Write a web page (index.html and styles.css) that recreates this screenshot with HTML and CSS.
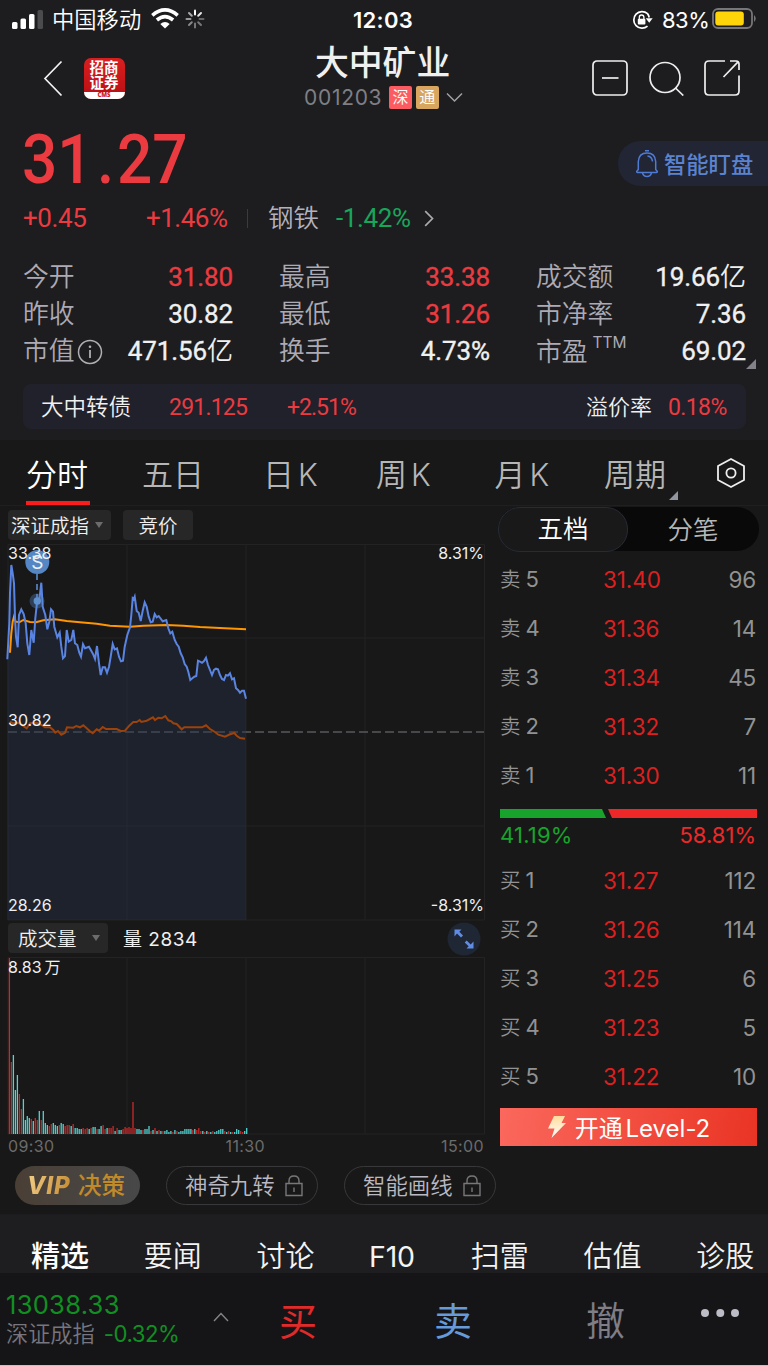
FILE: index.html
```html
<!DOCTYPE html>
<html lang="zh-CN">
<head>
<meta charset="utf-8">
<title>大中矿业</title>
<link rel="stylesheet" href="styles.css">
</head>
<body>
<div class="app">
  <div class="status">
    <svg class="signal" width="34" height="22" viewBox="0 0 34 22"><g fill="#fff"><rect x="1" y="13" width="5.5" height="7" rx="1.5"/><rect x="9.500" y="9.500" width="5.500" height="10.500" rx="1.500"/><rect x="18" y="5" width="5.500" height="15" rx="1.500"/><rect x="26.500" y="1" width="5.500" height="19" rx="1.500" fill="#4b4b4d"/></g></svg>
    <span class="carrier">中国移动</span>
    <svg class="wifi" width="28" height="21" viewBox="0 0 28 21" fill="none" stroke="#fff" stroke-width="3.6"><path d="M1.300 7.300Q14-3.500 26.700 7.300"/><path d="M5.900 12Q14 5.300 22.100 12"/><path d="M14 20.500L9.300 15.900Q14 12.200 18.700 15.900Z" fill="#fff" stroke="none"/></svg>
    <svg class="spinner" width="20" height="20" viewBox="-10 -10 20 20" stroke-width="2" stroke-linecap="round"><path d="M0-4.500V-8.500" stroke="#fff"/><path d="M3.200-3.200L6-6" stroke="#e5e5e5"/><path d="M4.500 0H8.500" stroke="#666"/><path d="M3.200 3.200L6 6M0 4.500V8.500" stroke="#777"/><path d="M-3.200 3.200L-6 6" stroke="#888"/><path d="M-4.500 0H-8.500" stroke="#999"/><path d="M-3.200-3.200L-6-6" stroke="#aaa"/></svg>
    <span class="clock">12:03</span>
    <svg class="rotlock" width="21" height="20" viewBox="0 0 21 20"><path d="M15.500 3.600A8.300 8.300 0 1 0 15.500 16.200M17.200 7.500A8.300 8.300 0 0 0 15.500 3.600" fill="none" stroke="#fff" stroke-width="1.700"/><path d="M13.700 8.300H20.700L17.200 12.800Z" fill="#fff"/><rect x="5.800" y="8.800" width="7.600" height="5.700" rx="1" fill="#fff"/><path d="M7.300 9V7.300a2.300 2.300 0 0 1 4.600 0V9" fill="none" stroke="#fff" stroke-width="1.300"/></svg>
    <span class="charge">83%</span>
    <svg class="battery" width="46" height="22" viewBox="0 0 46 22"><rect x="1" y="1" width="39" height="19" rx="5" fill="none" stroke="#77777a" stroke-width="1.800"/><rect x="3.300" y="3.600" width="28.500" height="14" rx="3" fill="#ffd50a"/><path d="M42 7Q45.500 10.500 42 14Z" fill="#77777a"/></svg>
  </div>

  <header class="nav">
    <svg class="back" width="20" height="38" viewBox="0 0 20 38"><path d="M18.500 2.500L2 19.500L18.500 36.500" fill="none" stroke="#f2f2f2" stroke-width="1.700"/></svg>
    <div class="logo"><div class="logo-name">招商<br>证券</div><div class="logo-sub">CMS</div></div>
    <div class="title">
      <h1>大中矿业</h1>
      <div class="code"><span class="code-num">001203</span><span class="badge sz">深</span><span class="badge tong">通</span><svg width="17" height="11" viewBox="0 0 17 11"><path d="M1 1.500L8.500 9L16 1.500" fill="none" stroke="#a0a0a2" stroke-width="1.500"/></svg></div>
    </div>
    <div class="actions">
      <svg width="36" height="36" viewBox="0 0 36 36" fill="none" stroke="#eee" stroke-width="1.700"><rect x="1" y="1" width="34" height="34" rx="4"/><path d="M10 18H26.500"/></svg>
      <svg width="36" height="36" viewBox="0 0 36 36" fill="none" stroke="#eee" stroke-width="1.700"><circle cx="17" cy="17.500" r="15"/><path d="M27.500 28L35.300 35.500"/></svg>
      <svg width="36" height="36" viewBox="0 0 36 36" fill="none" stroke="#eee" stroke-width="1.700"><path d="M21 1H5Q1 1 1 5V31Q1 35 5 35H31Q35 35 35 31V15.500"/><path d="M26 1H32Q35 1 35 4V10M34.300 1.700L19.500 17"/></svg>
    </div>
  </header>

  <section class="quote">
    <div class="price-row"><span class="price">31<i>.</i>27</span>
      <div class="watch"><svg width="22" height="28" viewBox="0 0 22 28" fill="none" stroke="#4f7bd3" stroke-width="1.500"><path d="M1.500 22.500Q.5 22.500 .8 21.300L2.300 19.500V11.500Q2.800 3 11 3T19.700 11.500V19.500L21.200 21.300Q21.500 22.500 20.500 22.500Z"/><path d="M9 .8H13M6.500 23Q7.500 26.500 11 26.500T15.500 23M11.500 6Q16 6.500 16.500 11.500"/></svg><span>智能盯盘</span></div>
    </div>
    <div class="change-row"><span class="c1 up">+0.45</span><span class="c2 up">+1.46%</span><i class="sep"></i><span class="c3">钢铁</span><span class="c4">-1.42%</span><svg width="10" height="17" viewBox="0 0 10 17"><path d="M1.200 1.200L8.500 8.500L1.200 15.800" fill="none" stroke="#aaa" stroke-width="1.700"/></svg></div>
    <div class="stats">
      <span class="k">今开</span><span class="v up">31.80</span><span class="k">最高</span><span class="v up">33.38</span><span class="k">成交额</span><span class="v">19.66<b>亿</b></span>
      <span class="k">昨收</span><span class="v">30.82</span><span class="k">最低</span><span class="v up">31.26</span><span class="k">市净率</span><span class="v">7.36</span>
      <span class="k">市值<svg width="26" height="26" viewBox="0 0 26 26"><circle cx="13" cy="13" r="11.500" fill="none" stroke="#b0b0b4" stroke-width="1.500"/><path d="M13 11V19" stroke="#b0b0b4" stroke-width="1.800"/><circle cx="13" cy="7.700" r="1.300" fill="#b0b0b4"/></svg></span><span class="v">471.56<b>亿</b></span><span class="k">换手</span><span class="v">4.73%</span><span class="k low">市盈<sup>TTM</sup></span><span class="v">69.02<i class="corner"></i></span>
    </div>
    <div class="bond"><span class="b1">大中转债</span><span class="b2 up">291.125</span><span class="b3 up">+2.51%</span><span class="b4">溢价率</span><span class="b5 up">0.18%</span></div>
  </section>

  <nav class="periods">
    <span class="on">分时</span><span>五日</span><span>日<em>K</em></span><span>周<em>K</em></span><span>月<em>K</em></span><span class="more">周期</span>
    <svg width="30" height="32" viewBox="0 0 30 32" fill="none" stroke="#eee" stroke-width="1.800"><path d="M15 2L28 9V23L15 30L2 23V9Z" stroke-linejoin="round"/><circle cx="15" cy="16" r="4.600"/></svg>
  </nav>

  <main class="body">
    <div class="left">
      <div class="chips"><span class="chip idx">深证成指<i class="tri"></i></span><span class="chip bid">竞价</span></div>
      <svg class="chart" width="490" height="381" viewBox="0 540 490 381">
        <g fill="none" stroke="#232323"><path d="M8 544.500H484.500V920H8ZM127 544V920M246 544V920M365 544V920M8 638H484M8 826H484"/></g>
        <path d="M8 732H484" stroke="#56585c" stroke-width="1.500" stroke-dasharray="9 4" fill="none"/>
        <path id="area" fill="#28324d" fill-opacity=".42"/>
        <path id="index" fill="none" stroke="#9c420b" stroke-width="2"/>
        <path id="average" fill="none" stroke="#ff9500" stroke-width="2"/>
        <path id="line" fill="none" stroke="#5a84e2" stroke-width="2"/>
        <path d="M37 574V602" stroke="#5a8cca" stroke-width="1.600" stroke-dasharray="6 4"/>
        <circle cx="37" cy="601" r="7.500" fill="#5b8dcc" fill-opacity=".35"/><circle cx="37.300" cy="601" r="3.700" fill="#5f91ce"/>
        <circle cx="37.300" cy="562" r="12" fill="#5587c5"/>
        <text x="37.300" y="568.500" class="mark">S</text>
        <text x="8" y="559">33.38</text><text x="8" y="725.500">30.82</text><text x="8" y="911">28.26</text>
        <text x="484" y="559" class="end">8.31%</text><text x="484" y="911" class="end">-8.31%</text>
      </svg>
      <div class="volhead"><span class="chip vol">成交量<i class="tri"></i></span><span class="voltext">量 2834</span>
        <svg class="expand" width="34" height="34" viewBox="0 0 34 34"><circle cx="17" cy="17" r="16.500" fill="#1f2634"/><g fill="#5f8de6"><path d="M7.500 7.500H14.500L12.300 9.700L16 13.500L14 15.500L10 11.500L7.500 14.500ZM26.500 26.500H19.500L21.700 24.300L17.700 20.500L19.700 18.500L23.700 22.500L26.500 19.500Z"/></g></svg></div>
      <svg class="volume" width="490" height="178" viewBox="0 957 490 178"><path d="M8 957.500H484.500V1134H8ZM127 957V1134M246 957V1134M365 957V1134" fill="none" stroke="#232323"/><path id="vol-up" stroke="#c82a2a" stroke-width="1.300"/><path id="vol-down" stroke="#4fd5d2" stroke-width="1.300"/><text x="8" y="973">8.83<tspan dx="3">万</tspan></text></svg>
      <div class="times"><span>09:30</span><span>11:30</span><span>15:00</span></div>
    </div>
    <aside class="book">
      <div class="seg"><span class="on">五档</span><span>分笔</span></div>
      <div class="rows">
        <div><span>卖<em>5</em></span><b>31.40</b><span>96</span></div>
        <div><span>卖<em>4</em></span><b>31.36</b><span>14</span></div>
        <div><span>卖<em>3</em></span><b>31.34</b><span>45</span></div>
        <div><span>卖<em>2</em></span><b>31.32</b><span>7</span></div>
        <div><span>卖<em>1</em></span><b>31.30</b><span>11</span></div>
      </div>
      <svg class="ratio" width="257" height="9" viewBox="0 0 257 9"><path d="M0 0H102L106 9H0Z" fill="#18a42c"/><path d="M108 0H257V9H112Z" fill="#ee2828"/></svg>
      <div class="pct"><span>41.19%</span><b>58.81%</b></div>
      <div class="rows">
        <div><span>买<em>1</em></span><b>31.27</b><span>112</span></div>
        <div><span>买<em>2</em></span><b>31.26</b><span>114</span></div>
        <div><span>买<em>3</em></span><b>31.25</b><span>6</span></div>
        <div><span>买<em>4</em></span><b>31.23</b><span>5</span></div>
        <div><span>买<em>5</em></span><b>31.22</b><span>10</span></div>
      </div>
      <div class="level"><svg width="20" height="24" viewBox="0 0 20 24"><defs><linearGradient id="bolt" x2="0" y2="1"><stop stop-color="#ffdc9c"/><stop offset="1" stop-color="#fff"/></linearGradient></defs><path d="M7 1H18L14.500 8H19L4.500 23L7.500 13.500H1Z" fill="url(#bolt)"/></svg><span>开通 Level-2</span></div>
    </aside>
  </main>

  <div class="tools">
    <span class="vip"><em>VIP</em><b>决策</b></span>
    <span class="tool">神奇九转<svg width="18" height="22" viewBox="0 0 18 22" fill="none" stroke="#77777a" stroke-width="1.400"><path d="M1 8.500H17V20.500H1ZM4 8.500V6Q4 1 9 1T14 6V8.500M9 12.500V17"/></svg></span>
    <span class="tool">智能画线<svg width="18" height="22" viewBox="0 0 18 22" fill="none" stroke="#77777a" stroke-width="1.400"><path d="M1 8.500H17V20.500H1ZM4 8.500V6Q4 1 9 1T14 6V8.500M9 12.500V17"/></svg></span>
  </div>

  <nav class="news"><span class="on">精选</span><span>要闻</span><span>讨论</span><span class="f10">F10</span><span>扫雷</span><span>估值</span><span>诊股</span></nav>

  <footer class="trade">
    <div class="market"><div class="m1">13038.33</div><div class="m2"><span>深证成指</span><b>-0.32%</b></div></div>
    <svg class="up-arrow" width="16" height="10" viewBox="0 0 16 10"><path d="M1 9L8 1.500L15 9" fill="none" stroke="#858589" stroke-width="1.400"/></svg>
    <span class="buy">买</span><span class="sell">卖</span><span class="cancel">撤</span>
    <svg class="dots" width="40" height="10" viewBox="0 0 40 10" fill="#bcbcc6"><circle cx="5" cy="5" r="4"/><circle cx="20.300" cy="5" r="4"/><circle cx="35" cy="5" r="4"/></svg>
  </footer>
</div>
<script src="chart.js"></script>
</body>
</html>
```
FILE: styles.css
```css
* { box-sizing: border-box; }
body { margin: 0; background: #1d1d1f; color: #f0f0f0; font-family: Inter, "Noto Sans CJK SC", sans-serif; font-size: 22px; }
svg { display: block; flex: none; }
em, i { font-style: normal; }
b, h1 { font-weight: 400; margin: 0; }
.app { width: 768px; height: 1366px; overflow: hidden; display: flex; flex-direction: column; white-space: nowrap; border-bottom: 1px solid #c4c4c4; }
.app > * { flex: none; }
.up { color: #eb3b40; }

.status { height: 40px; display: flex; align-items: center; padding-left: 11px; color: #fff; line-height: 40px; }
.signal { margin-top: -1px; }
.carrier { width: 89px; margin-left: 7px; font-size: 22.300px; font-weight: 350; }
.wifi { margin: -3px 0 0 10px; }
.spinner { margin: -2px 0 0 6px; }
.clock { width: 60px; margin-left: 148px; font-size: 22px; font-weight: 600; letter-spacing: .3px; }
.rotlock { margin-left: 219px; }
.charge { width: 47px; margin-left: 9px; font-size: 22px; letter-spacing: -.5px; }
.battery { margin: -2px 0 0 3px; }

.nav { height: 80px; display: flex; padding-left: 43px; }
.back { margin-top: 19px; }
.logo { width: 41px; height: 41px; margin: 17.500px 0 0 20.500px; border-radius: 7px; overflow: hidden; background: linear-gradient(#d81f20, #b90e12); color: #fff; text-align: center; }
.logo-name { height: 34px; padding-top: 2px; font-size: 14.500px; line-height: 15px; font-weight: 700; }
.logo-sub { height: 7px; background: #fff; color: #cc2020; font: 800 6px/7px "Open Sans", sans-serif; }
.title { width: 168px; margin-left: 179.500px; }
.title h1 { height: 44px; margin-left: 11px; line-height: 46px; font-size: 33.800px; font-weight: 500; }
.code { height: 26px; display: flex; align-items: center; color: #7f7f86; font-size: 21px; }
.code-num { width: 85px; letter-spacing: .7px; }
.badge { width: 23px; height: 23px; margin-right: 3.700px; border-radius: 2px; font-size: 16px; line-height: 22px; text-align: center; color: #fff; font-weight: 350; }
.sz { background: #fc5c61; }
.tong { background: #d9a660; }
.code svg { margin-left: 4px; }
.actions { display: flex; gap: 20px; margin: 20px 0 0 120px; }

.quote { height: 320px; font-family: Roboto, "Noto Sans CJK SC", sans-serif; }
.price-row { height: 78px; display: flex; justify-content: space-between; padding-left: 22px; }
.price { line-height: 80px; font-size: 69px; font-weight: 500; color: #eb3b40; transform: scaleX(.9); transform-origin: left; }
.price i { padding: 0 3px 0 5px; }
.watch { width: 150px; height: 45px; margin-top: 21px; padding-left: 18px; border-radius: 22px 0 0 22px; background: #212534; display: flex; align-items: center; gap: 6px; color: #5b83d0; font-size: 22.300px; font-weight: 500; }
.watch span { line-height: 40px; padding-top: 3px; }
.change-row { height: 40px; display: flex; align-items: center; padding-left: 23px; font-size: 26px; line-height: 40px; letter-spacing: -.4px; }
.c1 { width: 123px; }
.c2 { width: 101px; letter-spacing: -.5px; }
.sep { width: 1px; height: 19px; background: #3b3b3e; }
.c3 { width: 68px; margin-left: 20px; font-size: 25.500px; color: #b3b1bc; font-weight: 350; letter-spacing: 0; }
.c4 { width: 88px; color: #18a65b; }
.stats { display: grid; grid-template-columns: 90px 120px 137px 120px 137px 119px; grid-auto-rows: 37px; margin: 21px 0 0 23px; font-size: 26px; line-height: 37px; }
.stats .k:nth-child(6n + 3), .stats .k:nth-child(6n + 5) { padding-left: 46px; }
.k { color: #acaab5; font-size: 25.800px; font-weight: 350; display: flex; align-items: center; }
.k svg { margin-left: 2px; }
.v { justify-self: end; position: relative; letter-spacing: -.1px; -webkit-text-stroke: .35px currentColor; }
.v b { font-weight: 350; -webkit-text-stroke: 0; }
.low { padding-top: 2px; }
.low sup { margin-left: 5px; font: 400 15.500px/16px Inter, sans-serif; letter-spacing: 0; align-self: flex-start; }
.corner { position: absolute; right: -10px; bottom: 1px; border-left: 10px solid transparent; border-bottom: 10px solid #828288; }
.bond { height: 45px; margin: 14px 22px 0 23px; border-radius: 8px; background: #21212b; display: flex; line-height: 47px; font-size: 23px; padding-left: 18px; }
.b1 { width: 128px; font-size: 22.500px; font-weight: 350; }
.b2 { width: 118px; letter-spacing: -.8px; }
.b3 { width: 299px; letter-spacing: -1px; }
.b4 { width: 82px; font-size: 22px; font-weight: 350; }
.b5 { letter-spacing: -.6px; }

.periods { position: relative; height: 66px; background: #181818; display: grid; grid-template-columns: 116px 121px 113px 118.500px 109.500px 112px 40px; padding-left: 26px; line-height: 69px; font-size: 31px; font-weight: 350; color: #b6b6b6; border-bottom: 1px solid #1e1e26; }
.periods .on { color: #fff; position: relative; }
.periods .on::after { content: ""; position: absolute; left: 0; top: 61px; width: 64px; height: 4px; background: #f91d1d; }
.periods em { margin-left: 4px; font-size: 30.500px; }
.periods .more { position: relative; }
.periods .more::after { content: ""; position: absolute; left: 65px; top: 51px; border-left: 9px solid transparent; border-bottom: 9px solid #9095a0; }
.periods svg { margin-top: 17px; }

.body { height: 650px; display: flex; background: #181818; }
.left { width: 490px; }
.chips { height: 34px; padding: 4px 0 0 8px; display: flex; gap: 12px; }
.chip { height: 30px; border-radius: 4px; background: #272727; display: flex; align-items: center; font-size: 19.500px; line-height: 30px; padding-top: 2px; font-weight: 350; }
.idx { width: 103px; padding-left: 3px; }
.bid { width: 70px; justify-content: center; }
.vol { width: 100px; padding-left: 10px; }
.tri { margin: -2px 0 0 6px; border: 4.500px solid transparent; border-top: 6px solid #6c6c6c; border-bottom: 0; }
.vol .tri { margin-left: 15px; }
.chart text, .volume text { font-size: 16px; fill: #f0f0f0; }
.chart .end { text-anchor: end; }
.chart .mark { text-anchor: middle; font-size: 19px; }
.volhead { height: 36px; display: flex; padding: 2px 0 0 8px; }
.voltext { width: 339px; padding-left: 15px; font-size: 19px; line-height: 34px; letter-spacing: .5px; }
.expand { margin-top: -1px; }
.times { display: flex; justify-content: space-between; width: 484px; padding-left: 8px; color: #6b6b6b; font-size: 16px; line-height: 22px; letter-spacing: .4px; }
.times span:nth-child(2) { margin-left: -5px; }

.book { width: 268px; padding: 1px 0 0 8px; }
.seg { display: grid; grid-template-columns: 130px 130px; width: 261px; height: 44px; border-radius: 22px; background: #090909; line-height: 45px; font-size: 25.500px; text-align: center; color: #b6b6b6; font-weight: 350; }
.seg .on { border: 1px solid #262b36; border-radius: 22px; background: #19191a; color: #fff; line-height: 41px; }
.rows, .ratio, .pct { margin-left: 2px; }
.rows { margin-top: 4px; }
.rows div { display: grid; grid-template-columns: 103px 75px 78px; height: 48.900px; line-height: 49.500px; font-size: 22.500px; color: #929292; width: 256px; }
.rows span:first-child { font-size: 20.500px; font-weight: 350; }
.rows em { margin-left: 5px; font-size: 22px; font-weight: 400; }
.rows b { color: #dc2020; letter-spacing: -.1px; }
.rows span:last-child { text-align: right; letter-spacing: -.2px; }
.ratio { margin-top: 9.500px; }
.pct { display: flex; justify-content: space-between; width: 256px; height: 38px; line-height: 35px; color: #18a42c; font-size: 22px; letter-spacing: .2px; }
.pct b { color: #ee2828; letter-spacing: 0; }
.pct + .rows { margin-top: 0; }
.level { width: 257px; height: 38px; margin: 8px 0 0 2px; background: linear-gradient(100deg, #fb685d, #e93424); display: flex; align-items: center; justify-content: center; gap: 8px; color: #fff; font-size: 24px; }
.level span { word-spacing: -4px; line-height: 36px; padding-top: 3px; }

.tools { height: 59px; display: flex; padding: 10px 0 0 15px; background: #181818; border-bottom: 1px solid #1c1c1e; }
.vip { width: 125px; height: 39px; border-radius: 20px; background: linear-gradient(90deg, #4a3f35, #474849); display: flex; align-items: center; padding-left: 12px; line-height: 40px; }
.vip em { width: 51px; font: italic 800 24px/39px Inter, sans-serif; letter-spacing: .8px; background: linear-gradient(110deg, #f6d28c, #b87a1c); -webkit-background-clip: text; color: transparent; }
.vip b { font-size: 23.500px; font-weight: 450; color: #c18a29; }
.tool { width: 152px; height: 39px; margin-left: 26px; border: 1px solid #38383a; border-radius: 20px; display: flex; align-items: center; padding-left: 18px; gap: 10px; font-size: 22.400px; line-height: 37px; color: #bab8c2; font-weight: 350; }

.news { height: 58px; display: flex; gap: 54.700px; padding-left: 31px; background: #1e1e20; font-size: 29px; line-height: 84px; overflow: hidden; font-weight: 350; color: #f4f4f4; }
.news .on { font-weight: 500; color: #fff; }
.f10 { width: 47px; font-size: 28.500px; font-weight: 400; letter-spacing: -.3px; }

.trade { height: 92px; display: flex; background: #151518; padding: 14px 0 0 6px; }
.market { width: 207px; }
.m1 { color: #119022; font-size: 25.500px; line-height: 35px; letter-spacing: .3px; }
.m2 { display: flex; color: #77757e; line-height: 24px; font-size: 22.200px; font-weight: 350; }
.m2 b { margin-left: 9px; color: #119022; font-weight: 400; letter-spacing: -.5px; }
.up-arrow { margin-top: 25px; }
.buy, .sell, .cancel { line-height: 68px; font-size: 38px; }
.buy { width: 155px; margin-left: 50px; color: #e12a2a; }
.sell { width: 152px; color: #669ad9; }
.cancel { width: 114px; color: #7f7d86; font-size: 39px; font-weight: 350; }
.dots { margin-top: 21px; }
```
FILE: chart.js
```js
// Series points are stored in thirds of a pixel, relative to the top of the plot.
const price = "22,358 28,250 30,160 34,75 38,100 42,130 45,230 48,290 53,322 57,225 64,208 71,222 77,250 82,310 88,345 94,270 101,308 106,235 112,180 118,180 124,128 128,200 136,225 142,268 148,245 153,208 159,215 163,260 167,275 172,292 179,278 184,320 189,355 195,348 200,270 206,305 214,300 220,270 225,310 232,315 238,338 243,350 249,313 255,325 267,320 279,342 285,357 291,318 297,370 302,405 308,382 315,382 321,398 327,380 332,350 338,312 344,328 351,325 357,350 363,364 369,362 374,320 382,285 390,262 394,225 398,175 401,178 404,170 410,213 416,218 422,243 428,212 434,187 440,200 446,230 452,247 458,245 464,222 470,232 476,228 488,244 499,240 505,265 511,280 517,275 524,300 530,312 536,320 542,340 548,352 554,372 560,380 565,395 571,420 577,415 583,410 589,408 594,362 600,365 606,368 612,363 618,353 624,375 630,390 636,405 642,390 648,386 654,388 660,405 666,417 672,420 678,405 684,407 690,400 696,418 702,415 708,445 714,450 720,458 726,452 732,452 738,476";
const average = "30,338 34,280 38,245 42,230 47,245 58,247 70,240 90,246 108,247 130,241 165,238 200,243 240,247 290,251 330,257 390,260 430,257 500,255 550,257 600,261 660,264 738,268";
const index = "30,545 40,550 55,548 65,555 80,565 90,550 110,548 125,555 135,562 150,562 160,570 166,578 174,573 184,584 195,578 201,562 220,563 229,558 240,562 250,556 260,565 270,574 278,580 290,568 297,572 308,561 318,567 350,567 362,573 375,572 388,557 400,546 410,546 419,540 424,546 440,542 459,532 465,540 475,533 485,535 496,528 505,541 514,544 520,550 530,552 545,568 553,562 606,562 618,556 630,567 645,576 655,584 675,590 690,583 703,579 710,587 720,594 735,596";
const toPath = s => "M" + s.split(" ").map(p => {
  const [x, y] = p.split(",");
  return (x / 3).toFixed(1) + " " + (540 + y / 3).toFixed(1);
}).join("L");
const set = (id, d) => document.getElementById(id).setAttribute("d", d);
set("line", toPath(price));
set("area", toPath(price) + "V920H7.3Z");
set("average", toPath(average));
set("index", toPath(index));

// One bar per minute: r = rising, c = falling, followed by its height.
const bars = "r176 r72 c79 c44 c59 r40 r25 c35 c14 c18 c16 r15 c13 r16 r14 c23 r14 c23 c11 c9 r8 r10 c11 c9 c8 r9 c11 c10 r8 r9 r9 c8 r10 c6 c6 c5 c5 r6 r5 r6 c5 r6 c7 c7 r5 c5 c8 r9 r5 c6 r6 r6 r8 c3 r6 c4 c4 r5 r7 r6 r7 r6 r32 r6 c5 c5 c4 r4 c5 c5 c8 r3 c4 r6 c3 r4 c3 r3 c3 c4 c2 c3 r2 c4 r3 c2 c3 c3 c5 c5 c5 c5 r4 c5 r4 r6 r3 c3 r2 c3 r2 c2 r3 c2 c3 c4 c5 c5 r3 c2 r3 c2 r2 c2 c5 c4 r3 r2 c3 c6";
let up = "", down = "";
bars.split(" ").forEach((b, i) => {
  const x = (9.4 + i * 1.994).toFixed(1);
  const seg = `M${x} 1134V${1134 - b.slice(1)}`;
  if (b[0] === "r") up += seg; else down += seg;
});
set("vol-up", up);
set("vol-down", down);
```
